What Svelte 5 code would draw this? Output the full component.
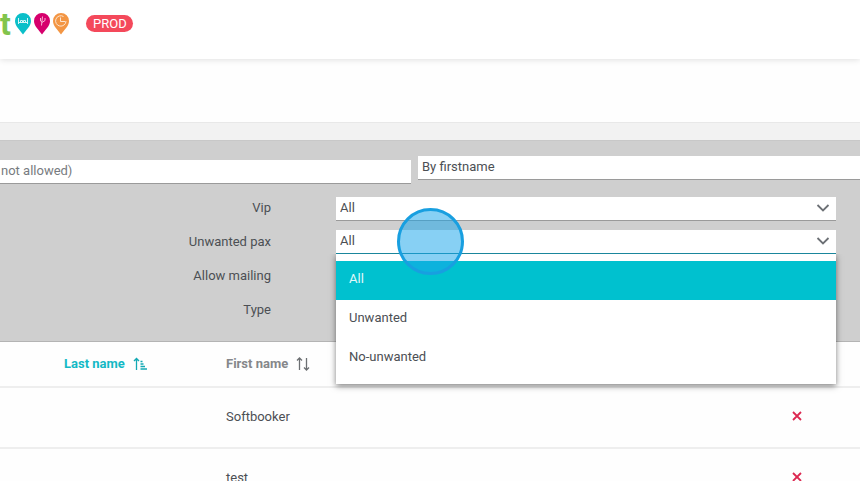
<script lang="ts">
	const options = ['All', 'Unwanted', 'No-unwanted'];

	const filters = [
		{ id: 'vip', label: 'Vip' },
		{ id: 'unwanted', label: 'Unwanted pax' },
		{ id: 'mailing', label: 'Allow mailing' },
		{ id: 'type', label: 'Type' }
	];

	const rows = [
		{ lastName: '', firstName: 'Softbooker' },
		{ lastName: '', firstName: 'test' }
	];

	let values: Record<string, string> = $state({
		vip: 'All',
		unwanted: 'All',
		mailing: 'All',
		type: 'All'
	});
	let isOpen = $state(true);

	function choose(option: string) {
		values.unwanted = option;
		isOpen = false;
	}
</script>

<div class="page">
	<header>
		<div class="logo">
			<span class="logo-text">t</span>
			<svg class="pin" viewBox="0 0 16 22">
				<path fill="#0bbfc9" d="M8 0a8 8 0 0 1 8 8c0 5-4.500 8.500-8 13.500C4.500 16.500 0 13 0 8a8 8 0 0 1 8-8z" />
				<path fill="none" stroke="#d5f5f7" d="M3.500 5v6M12.500 5v6M3.500 9.500h9M5.500 9V7.500h2V9M8.500 9V7.500h2V9" />
			</svg>
			<svg class="pin" viewBox="0 0 16 22">
				<path fill="#d6006d" d="M8 0a8 8 0 0 1 8 8c0 5-4.500 8.500-8 13.500C4.500 16.500 0 13 0 8a8 8 0 0 1 8-8z" />
				<path fill="none" stroke="#f7b5d5" d="M7.500 12.500l1-9M6.500 5v3l1.500 1M11 5v2.500L8 9.500" />
			</svg>
			<svg class="pin" viewBox="0 0 16 22">
				<path fill="#f39644" d="M8 0a8 8 0 0 1 8 8c0 5-4.500 8.500-8 13.500C4.500 16.500 0 13 0 8a8 8 0 0 1 8-8z" />
				<path fill="none" stroke="#fde5d0" d="M10.500 3.500A5.200 5.200 0 1 0 13 8M7.500 4.500v4H12" />
			</svg>
		</div>
		<span class="badge">PROD</span>
	</header>

	<main>
		<div class="band"></div>
		<section class="filters">
			<div class="search">
				<input class="name" type="text" placeholder="not allowed)" aria-label="Name" />
				<input class="firstname" type="text" value="By firstname" aria-label="By firstname" />
			</div>
			<div class="options">
				<div class="labels">
					{#each filters as filter}
						<label for={filter.id}>{filter.label}</label>
					{/each}
				</div>
				<div class="fields">
					{#each filters as filter}
						<div class="field" class:open={filter.id === 'unwanted' && isOpen}>
							<select id={filter.id} bind:value={values[filter.id]}>
								{#each options as option}
									<option value={option}>{option}</option>
								{/each}
							</select>
							<svg class="chevron" viewBox="0 0 14 8">
								<path d="M1.500 1L7 6.500 12.500 1" />
							</svg>
							{#if filter.id === 'unwanted' && isOpen}
								<div class="menu" role="listbox" aria-label="Unwanted pax">
									{#each options as option}
										<button
											role="option"
											aria-selected={option === values.unwanted}
											class:selected={option === values.unwanted}
											onclick={() => choose(option)}
										>
											{option}
										</button>
									{/each}
								</div>
								<div class="pointer"></div>
							{/if}
						</div>
					{/each}
				</div>
			</div>
		</section>

		<table>
			<thead>
				<tr>
					<th class="last sorted">
						Last name
						<svg class="sort" viewBox="0 0 14 14">
							<path d="M3.500 13V1.500M1 4l2.500-2.500L6 4M7.500 4.500h2M7.500 7h3M7.500 9.500h4.500M7.500 12h6.500" />
						</svg>
					</th>
					<th class="first">
						First name
						<svg class="sort" viewBox="0 0 14 14">
							<path d="M3.500 13V1M1 3.500L3.500 1 6 3.500M10.500 1v12M8 10.500l2.500 2.500 2.500-2.500" />
						</svg>
					</th>
					<th class="flag"></th>
				</tr>
			</thead>
			<tbody>
				{#each rows as row}
					<tr>
						<td class="last">{row.lastName}</td>
						<td class="first">{row.firstName}</td>
						<td class="flag">
							<svg class="cross" viewBox="0 0 10 10">
								<path d="M1 1l8 8M9 1l-8 8" />
							</svg>
						</td>
					</tr>
				{/each}
			</tbody>
		</table>
	</main>
</div>

<style>
	:global(body) {
		background: #fefefe;
	}

	.page {
		height: 100vh;
		overflow: hidden;
		font-family: Roboto, sans-serif;
		font-size: 13px;
		line-height: 16px;
		color: #4c4f54;
	}

	.page * {
		box-sizing: border-box;
	}

	header {
		display: flex;
		align-items: center;
		gap: 17px;
		height: 59px;
		padding-bottom: 12px;
		background: #fff;
		box-shadow: 0 1px 6px rgba(0, 0, 0, 0.12);
	}

	.logo {
		display: flex;
		align-items: center;
		gap: 3px;
	}

	.logo-text {
		width: 12px;
		font-size: 32px;
		line-height: 32px;
		font-weight: 700;
		color: #82c44c;
	}

	.pin {
		width: 16px;
		height: 22px;
	}

	.badge {
		padding: 0 6px 0 7px;
		border-radius: 9px;
		background: #f4495b;
		color: #fff;
		line-height: 17px;
	}

	main {
		padding-top: 63px;
	}

	.band {
		height: 18px;
		background: #f2f2f2;
		border-top: 1px solid #e8e8e8;
	}

	.filters {
		height: 202px;
		padding-top: 15px;
		background: #cfcfcf;
		border-top: 1px solid #c8c8c8;
		border-bottom: 1px solid #b4b4b4;
	}

	.search {
		display: flex;
		align-items: flex-start;
		gap: 7px;
	}

	input,
	select {
		height: 24px;
		margin: 0;
		padding: 0 4px 2px;
		border: 0;
		border-bottom: 1px solid #9a9a9a;
		border-radius: 0;
		outline: none;
		background: #fff;
		color: #4c4f54;
		font: inherit;
		appearance: none;
	}

	.name {
		flex: 1 1 411px;
		min-width: 0;
		margin-top: 4px;
		padding-left: 1px;
	}

	.name::placeholder {
		color: #777b80;
		opacity: 1;
	}

	.firstname {
		flex: 1 1 442px;
		min-width: 0;
	}

	.options {
		display: flex;
		gap: 65px;
		padding: 13px 24px 0 0;
	}

	.labels {
		display: flex;
		flex-direction: column;
		gap: 12px;
		width: 271px;
		text-align: right;
	}

	.labels label {
		line-height: 22px;
	}

	.fields {
		flex: 1;
		display: flex;
		flex-direction: column;
		gap: 9px;
	}

	.field {
		position: relative;
		height: 24px;
	}

	.field select {
		display: block;
		width: 100%;
	}

	.field.open {
		z-index: 1;
	}

	.field.open select {
		border-bottom-color: #1a869c;
	}

	.chevron {
		position: absolute;
		top: 7px;
		right: 6px;
		width: 14px;
		height: 8px;
		pointer-events: none;
	}

	.chevron path {
		fill: none;
		stroke: #6c7075;
		stroke-width: 1.8;
	}

	.menu {
		position: absolute;
		top: 100%;
		left: 0;
		right: 0;
		padding: 7px 0 6px;
		background: #fff;
		box-shadow: 0 2px 6px rgba(0, 0, 0, 0.5);
		clip-path: inset(0 -10px -10px -10px);
	}

	.menu button {
		display: block;
		width: 100%;
		height: 39px;
		padding: 0 13px 4px;
		border: 0;
		background: none;
		color: inherit;
		font: inherit;
		text-align: left;
		cursor: pointer;
	}

	.menu button.selected {
		background: #00c1cf;
		color: #e2f8fa;
	}

	/* click highlight */
	.pointer {
		position: absolute;
		top: -22px;
		left: 61px;
		width: 67px;
		height: 67px;
		border: 3px solid #189fe0;
		border-radius: 50%;
		background: rgba(24, 165, 233, 0.52);
		pointer-events: none;
	}

	table {
		width: 100%;
		border-spacing: 0;
		table-layout: fixed;
		background: #fefefe;
	}

	th,
	td {
		padding: 0;
		border-bottom: 2px solid #eee;
		text-align: left;
		vertical-align: middle;
	}

	th {
		height: 46px;
		color: #85878a;
		font-weight: 700;
	}

	td {
		height: 61px;
		padding-bottom: 2px;
	}

	.last {
		width: 226px;
		padding-left: 64px;
	}

	.sorted {
		color: #13b9c5;
	}

	.flag {
		width: 126px;
		text-align: center;
	}

	.sort {
		width: 14px;
		height: 14px;
		margin-left: 5px;
		vertical-align: -3px;
	}

	.sort path {
		fill: none;
		stroke: #6c6f72;
		stroke-width: 1.3;
	}

	.sorted .sort path {
		stroke: #13a9b4;
	}

	.cross {
		width: 10px;
		height: 10px;
	}

	.cross path {
		fill: none;
		stroke: #dc2850;
		stroke-width: 1.8;
	}
</style>
